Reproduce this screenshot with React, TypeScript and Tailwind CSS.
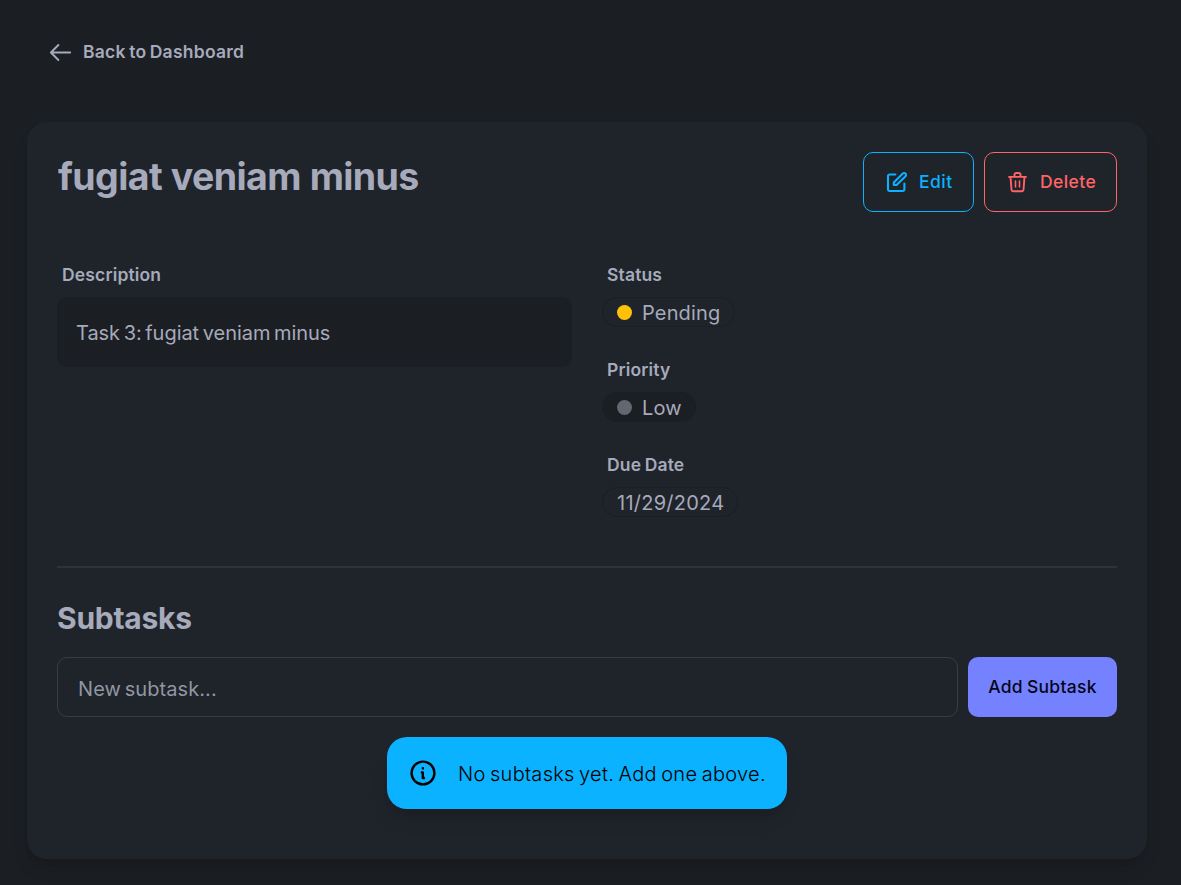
import type { ReactNode } from "react";

function ArrowLeftIcon() {
  return (
    <svg className="h-[25px] w-[25px] shrink-0" viewBox="0 0 25 25" fill="none" stroke="currentColor" strokeWidth="1.9" strokeLinecap="round" strokeLinejoin="round">
      <path d="M23.2 12.5H4M11.4 5 3.9 12.5l7.5 7.5" />
    </svg>
  );
}

function EditIcon() {
  return (
    <svg className="h-[20px] w-[20px] shrink-0 overflow-visible" viewBox="0 0 20 20" fill="none" stroke="currentColor" strokeWidth="2.1" strokeLinecap="round" strokeLinejoin="round">
      <path d="M8.4 2.5H2.6A1.6 1.6 0 0 0 1 4.1v13.2A1.6 1.6 0 0 0 2.6 19h13.2a1.6 1.6 0 0 0 1.6-1.7v-5.8" />
      <path d="M15.8 1.6a1.8 1.8 0 0 1 2.7 2.6L9.6 13H6.8v-2.6Z" />
    </svg>
  );
}

function TrashIcon() {
  return (
    <svg className="h-[20px] w-[20px] shrink-0 overflow-visible" viewBox="0 0 20 20" fill="none" stroke="currentColor" strokeWidth="1.9" strokeLinecap="round" strokeLinejoin="round">
      <path d="M2 4.9h17M3.5 4.9l1 12.9a1.6 1.6 0 0 0 1.6 1.5h8.8a1.6 1.6 0 0 0 1.6-1.5l1-12.9M7.5 4.6V2.7A1.7 1.7 0 0 1 9.2 1h2.6a1.7 1.7 0 0 1 1.7 1.7v1.9" />
      <path d="M8.5 9v6M12.5 9v6" strokeWidth="1.6" />
    </svg>
  );
}

function InfoIcon() {
  return (
    <svg className="h-[26px] w-[26px] shrink-0" viewBox="0 0 26 26" fill="none" stroke="currentColor" strokeWidth="2.4" strokeLinejoin="round">
      <circle cx="13" cy="13" r="11.4" />
      <path d="M10.8 12.4h2v5.6h2.1" />
      <path d="M11.8 8.3h2.2" />
    </svg>
  );
}

function Label({ children }: { children: ReactNode }) {
  return (
    <div className="flex h-[45px] items-center px-[5px] pt-[2px] text-[17.5px] font-[580] tracking-[0.15px] [word-spacing:-1px]">
      {children}
    </div>
  );
}

function Field({ label, children }: { label: string; children: ReactNode }) {
  return (
    <div className="flex h-[95px] flex-col items-start">
      <Label>{label}</Label>
      {children}
    </div>
  );
}

export default function App() {
  return (
    <div className="h-[885px] overflow-hidden bg-[#1b1e22] px-[27px] font-['Inter',sans-serif] text-[20px] text-[#a6aabb]">
      <header className="flex h-[122px] items-start pt-[22px] pl-[20px]">
        <a className="flex h-[60px] items-center gap-[11px] text-[17.5px] font-[580]">
          <ArrowLeftIcon />
          <span className="tracking-[0.24px] [word-spacing:-1.2px]">Back to Dashboard</span>
        </a>
      </header>

      <main className="h-[737px] w-[1120px] rounded-[20px] bg-[#1f232a] p-[30px] shadow-[0_12px_19px_-4px_rgba(0,0,0,0.12),0_5px_8px_-5px_rgba(0,0,0,0.1)]">
        <div className="flex h-[100px] items-start justify-between">
          <h1 className="pl-px text-[37.5px] leading-[49px] font-bold tracking-[-0.6px] [word-spacing:0.5px]">fugiat veniam minus</h1>
          <div className="flex gap-[10px] text-[17.5px] font-medium">
            <button className="flex h-[60px] w-[111px] items-center gap-[12px] rounded-[10px] border border-[#0ab2ff] pl-[23px] text-[#0ab2ff]">
              <EditIcon />
              <span className="tracking-[0.5px]">Edit</span>
            </button>
            <button className="flex h-[60px] w-[133px] items-center gap-[13px] rounded-[10px] border border-[#ff6467] pl-[22px] text-[#ff6467]">
              <TrashIcon />
              <span className="tracking-[0.4px]">Delete</span>
            </button>
          </div>
        </div>

        <div className="grid h-[314px] grid-cols-2 gap-[30px]">
          <div>
            <Label>Description</Label>
            <div className="flex h-[70px] items-center rounded-[10px] bg-[#1b1e22] px-[19px] pt-[2px] tracking-[-0.04px] [word-spacing:-2px]">
              Task 3: fugiat veniam minus
            </div>
          </div>
          <div>
            <Field label="Status">
              <div className="flex h-[30px] w-[133px] items-center gap-[10px] rounded-full border border-[#1b1e22] pl-[14px]">
                <span className="h-[15px] w-[15px] rounded-full bg-[#ffc107]" />
                <span className="pt-[2px] tracking-[0.15px]">Pending</span>
              </div>
            </Field>
            <Field label="Priority">
              <div className="flex h-[30px] w-[94px] items-center gap-[10px] rounded-full bg-[#1b1e22] pl-[15px]">
                <span className="h-[15px] w-[15px] rounded-full bg-[#636770]" />
                <span className="pt-[2px] tracking-[0.1px]">Low</span>
              </div>
            </Field>
            <Field label="Due Date">
              <div className="flex h-[30px] w-[136px] items-center rounded-full border border-[#1b1e22] pl-[14px]">
                <span className="pt-[2px] tracking-[0.25px]">11/29/2024</span>
              </div>
            </Field>
          </div>
        </div>

        <div className="h-[2px] bg-[#2e333a]" />

        <h2 className="mt-[29px] h-[60px] text-[30px] leading-[42px] font-bold tracking-[-0.25px]">Subtasks</h2>
        <div className="flex gap-[10px]">
          <input
            className="h-[60px] min-w-0 flex-1 rounded-[10px] border border-[#383c43] bg-transparent px-[20px] pt-[4px] tracking-[0.08px] outline-none [word-spacing:-2px] placeholder:text-[#9196a2]"
            placeholder="New subtask..."
          />
          <button className="h-[60px] w-[149px] rounded-[10px] bg-[#7582ff] text-[17.5px] font-[480] tracking-[0.3px] text-[#050617] [word-spacing:-1px]">
            Add Subtask
          </button>
        </div>
        <div className="mx-auto mt-[20px] flex h-[72px] w-[400px] items-center gap-[22px] rounded-[20px] bg-[#0ab2ff] pl-[23px] text-black shadow-[0_12px_19px_-4px_rgba(0,0,0,0.12),0_5px_8px_-5px_rgba(0,0,0,0.1)]">
          <InfoIcon />
          <span className="pt-[1px] font-light tracking-[0.28px] whitespace-nowrap [word-spacing:-1.5px]">No subtasks yet. Add one above.</span>
        </div>
      </main>
    </div>
  );
}
